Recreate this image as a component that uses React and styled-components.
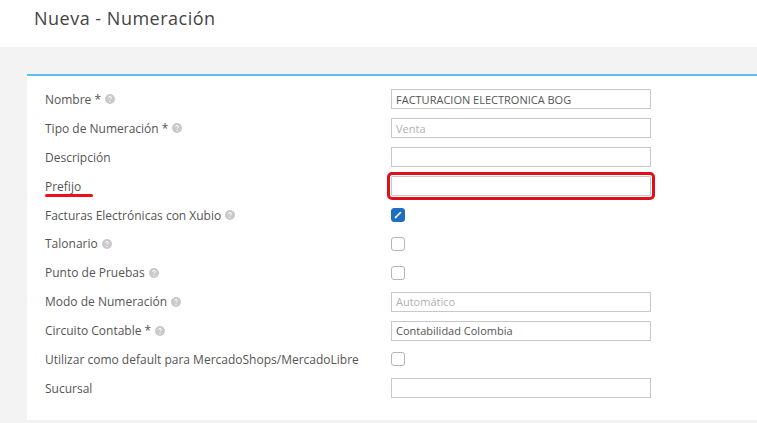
import styled, { createGlobalStyle } from "styled-components";

const GlobalStyle = createGlobalStyle`
  body {
    margin: 0;
    background: #ffffff;
    font-family: "Open Sans", "Noto Sans", sans-serif;
  }
`;

const fields = [
  { label: "Nombre *", help: true, type: "text", value: "FACTURACION ELECTRONICA BOG" },
  { label: "Tipo de Numeración *", help: true, type: "text", placeholder: "Venta" },
  { label: "Descripción", type: "text" },
  { label: "Prefijo", type: "text", marked: true },
  { label: "Facturas Electrónicas con Xubio", help: true, type: "check", checked: true },
  { label: "Talonario", help: true, type: "check" },
  { label: "Punto de Pruebas", help: true, type: "check" },
  { label: "Modo de Numeración", help: true, type: "text", placeholder: "Automático" },
  { label: "Circuito Contable *", help: true, type: "text", value: "Contabilidad Colombia" },
  { label: "Utilizar como default para MercadoShops/MercadoLibre", type: "check" },
  { label: "Sucursal", type: "text" },
];

function HelpIcon() {
  return (
    <svg width="10" height="10" viewBox="0 0 10 10">
      <circle cx="5" cy="5" r="5" fill="#c9c9c9" />
      <path
        d="M3.6 3.9a1.4 1.4 0 0 1 2.8 0c0 .9-1.4 1-1.4 1.8"
        stroke="#fff"
        strokeWidth="1"
        fill="none"
      />
      <circle cx="5" cy="7.4" r="0.6" fill="#fff" />
    </svg>
  );
}

function Check({ checked }) {
  return (
    <CheckBox $checked={checked}>
      {checked && (
        <svg width="8" height="8" viewBox="0 0 8 8">
          <path d="M1.5 6.5 L6.5 1.5" stroke="#fff" strokeWidth="1.6" strokeLinecap="round" />
          <circle cx="1.8" cy="6.2" r="1" fill="#fff" />
        </svg>
      )}
    </CheckBox>
  );
}

export default function App() {
  return (
    <>
      <GlobalStyle />
      <Header>
        <Title>Nueva - Numeración</Title>
      </Header>
      <Body>
        <Card>
          {fields.map((f) => (
            <Row key={f.label}>
              <Label $marked={f.marked}>
                <span>{f.label}</span>
                {f.help && <HelpIcon />}
              </Label>
              <Control>
                {f.type === "check" ? (
                  <Check checked={f.checked} />
                ) : (
                  <Input $marked={f.marked} $placeholder={!f.value && !!f.placeholder}>
                    {f.value || f.placeholder || ""}
                  </Input>
                )}
              </Control>
            </Row>
          ))}
        </Card>
      </Body>
    </>
  );
}

const Header = styled.div`
  height: 47px;
  padding-left: 34px;
  display: flex;
  align-items: flex-start;
`;

const Title = styled.h1`
  margin: 6px 0 0;
  font-size: 18px;
  font-weight: 400;
  color: #444;
  letter-spacing: 0.5px;
`;

const Body = styled.div`
  background: #f3f3f3;
  padding: 27px 0 3px 27px;
`;

const Card = styled.div`
  background: #fff;
  border-top: 2px solid #5ec0ef;
  padding: 9px 0 17px 18px;
  display: flex;
  flex-direction: column;
`;

const Row = styled.div`
  display: grid;
  grid-template-columns: 346px 260px;
  align-items: center;
  height: 28.9px;
`;

const Label = styled.div`
  display: flex;
  align-items: center;
  gap: 4px;
  font-size: 12px;
  color: #555;
  position: relative;

  ${(p) =>
    p.$marked &&
    `
    &::after {
      content: "";
      position: absolute;
      left: 0;
      top: 16px;
      width: 48px;
      height: 3px;
      border-radius: 2px;
      background: #e8121b;
    }
  `}
`;

const Control = styled.div`
  display: flex;
  align-items: center;
`;

const Input = styled.div`
  box-sizing: border-box;
  width: 260px;
  height: 20px;
  border: 1px solid #c8c8c8;
  padding: 0 4px;
  display: flex;
  align-items: center;
  font-size: 11px;
  color: ${(p) => (p.$placeholder ? "#b0b0b0" : "#555")};
  ${(p) =>
    p.$marked &&
    `
    outline: 3px solid #e0101a;
    outline-offset: 1px;
    border-radius: 1px;
  `}
`;

const CheckBox = styled.div`
  box-sizing: border-box;
  width: 14px;
  height: 14px;
  border-radius: 3px;
  border: 1px solid ${(p) => (p.$checked ? "#1c6fbf" : "#b5b5b5")};
  background: ${(p) => (p.$checked ? "#1c6fbf" : "#fff")};
  display: flex;
  align-items: center;
  justify-content: center;
`;
